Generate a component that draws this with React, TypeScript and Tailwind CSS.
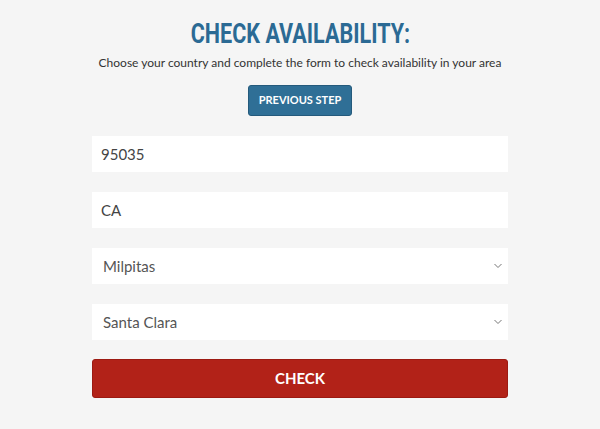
import React from "react";

function Chevron() {
  return (
    <svg width="8" height="5" viewBox="0 0 8 5" className="absolute right-[6px] top-1/2 -translate-y-1/2" fill="none">
      <path d="M0.5 0.5 L4 4 L7.5 0.5" stroke="#777" strokeWidth="1" />
    </svg>
  );
}

export default function App() {
  return (
    <div className="w-[600px] h-[429px] bg-[#f5f5f5] flex flex-col items-center" style={{ fontFamily: "Lato, 'Open Sans', sans-serif" }}>
      <h1 className="mt-[20px] text-[28px] leading-[28px] font-bold text-[#2b6a94] scale-x-[0.77]" style={{ fontFamily: "Roboto, sans-serif" }}>
        CHECK AVAILABILITY:
      </h1>
      <p className="mt-[7px] text-[12px] leading-[16px] text-[#333]">
        Choose your country and complete the form to check availability in your area
      </p>
      <button className="mt-[14px] w-[104px] h-[31px] rounded-[3px] bg-[#2f6f96] border border-[#245a7c] text-white text-[11px] font-bold">
        PREVIOUS STEP
      </button>
      <div className="mt-[20px] w-[416px] flex flex-col gap-[20px]">
        <div className="h-[36px] bg-white flex items-center pl-[9px] text-[15px] text-[#444]">95035</div>
        <div className="h-[36px] bg-white flex items-center pl-[9px] text-[15px] text-[#444]">CA</div>
        <div className="relative h-[36px] bg-white flex items-center pl-[11px] text-[15px] text-[#555]">
          Milpitas
          <Chevron />
        </div>
        <div className="relative h-[36px] bg-white flex items-center pl-[11px] text-[15px] text-[#555]">
          Santa Clara
          <Chevron />
        </div>
      </div>
      <button className="mt-[19px] w-[416px] h-[39px] rounded-[3px] bg-[#b22218] border border-[#9c1a12] text-white text-[15px] font-bold">
        CHECK
      </button>
    </div>
  );
}
